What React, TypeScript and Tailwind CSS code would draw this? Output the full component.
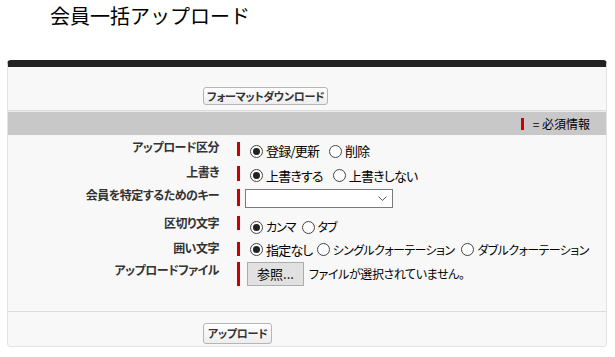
import React from 'react';

// Japanese UI text stack
const jp = "font-['Noto_Sans_CJK_JP','Noto_Sans',sans-serif] [font-feature-settings:'palt']";

interface RadioProps {
  label: string;
  checked?: boolean;
  gap?: string;
  text?: string;
}

const Radio: React.FC<RadioProps> = ({ label, checked, gap = 'mr-[10px]', text = 'text-[13px] tracking-[-0.8px]' }) => (
  <span className={`flex items-center whitespace-nowrap ${gap}`}>
    <span className="shrink-0 w-[13px] h-[13px] rounded-full border border-[#444] bg-white flex items-center justify-center">
      {checked && <span className="w-[7px] h-[7px] rounded-full bg-[#222]" />}
    </span>
    <span className={`ml-[3px] leading-[16px] text-black ${text}`}>{label}</span>
  </span>
);

interface RowProps {
  label: string;
  rowCls: string;
  barCls: string;
  fieldCls: string;
  children: React.ReactNode;
}

const Row: React.FC<RowProps> = ({ label, rowCls, barCls, fieldCls, children }) => (
  <div className={`flex ${rowCls}`}>
    <div className="w-[211px] shrink-0 text-right text-[12px] leading-[16px] tracking-[-0.5px] font-bold text-[#333] whitespace-nowrap">{label}</div>
    <div className={`shrink-0 ml-[18px] w-[3px] bg-[#c00] ${barCls}`} />
    <div className={`flex whitespace-nowrap ${fieldCls}`}>{children}</div>
  </div>
);

const App: React.FC = () => {
  return (
    <div className={`w-[615px] h-[357px] bg-white ${jp}`}>
      {/* Page title */}
      <h1 className="h-[30px] pl-[50px] pt-[3px] text-[20px] leading-[26px] text-black font-['Noto_Sans_CJK_JP',sans-serif] [font-feature-settings:normal]">
        会員一括アップロード
      </h1>

      <div className="mt-[30px] ml-[7px] w-[600px] bg-[#f8f8f8] border border-[#e3e3e3] border-t-[7px] border-t-[#222] rounded-[4px]">
        {/* Top buttons */}
        <div className="h-[44px] pl-[195px] pt-[15px] border-b border-[#dcdcdc]">
          <button className="h-[18px] px-[3px] text-[11px] leading-[16px] font-bold tracking-[-0.3px] text-[#333] bg-gradient-to-b from-white to-[#ededed] border border-[#b5b5b5] rounded-[3px]">
            フォーマットダウンロード
          </button>
        </div>

        {/* Required info bar */}
        <div className="h-[24px] bg-[#c8c8c8] border-t border-[#ececec] flex items-center justify-end pr-[16px]">
          <span className="w-[3px] h-[12px] bg-[#c00]" />
          <span className="ml-[9px] text-[12px] leading-[16px] text-black">= 必須情報</span>
        </div>

        {/* Form rows */}
        <div className="h-[176px] pt-[4px]">
          <Row label="アップロード区分" rowCls="h-[24px]" barCls="mt-[3px] h-[14px]" fieldCls="ml-[10px] items-center">
            <Radio label="登録/更新" checked />
            <Radio label="削除" />
          </Row>
          <Row label="上書き" rowCls="h-[24px] pt-[1px]" barCls="mt-[2px] h-[15px]" fieldCls="ml-[10px] items-center">
            <Radio label="上書きする" checked />
            <Radio label="上書きしない" />
          </Row>
          <Row label="会員を特定するためのキー" rowCls="h-[26px]" barCls="mt-[2px] h-[17px]" fieldCls="ml-[5px] items-start pt-[2px]">
            <div className="w-[148px] h-[19px] bg-white border border-[#7a7a7a] flex items-center justify-end pr-[5px]">
              <svg width="9" height="6" viewBox="0 0 9 6">
                <polyline points="0.5,0.5 4.5,4.5 8.5,0.5" fill="none" stroke="#555" strokeWidth="1" />
              </svg>
            </div>
          </Row>
          <Row label="区切り文字" rowCls="h-[26px] pt-[2px]" barCls="mt-[1px] h-[14px]" fieldCls="ml-[10px] items-center h-[24px]">
            <Radio label="カンマ" checked gap="mr-[6px]" text="text-[12px] tracking-[-1px]" />
            <Radio label="タブ" text="text-[12px] tracking-[-1px]" />
          </Row>
          <Row label="囲い文字" rowCls="h-[20px] pt-[1px]" barCls="mt-[2px] h-[14px]" fieldCls="ml-[10px] items-center h-[19px]">
            <Radio label="指定なし" checked gap="mr-[4px]" />
            <Radio label="シングルクォーテーション" gap="mr-[7px]" text="text-[12px] tracking-[-0.6px]" />
            <Radio label="ダブルクォーテーション" gap="mr-0" text="text-[12px] tracking-[-0.6px]" />
          </Row>
          <Row label="アップロードファイル" rowCls="h-[28px] pt-[3px]" barCls="h-[24px]" fieldCls="ml-[7px] items-center h-[24px]">
            <button className="w-[57px] h-[24px] bg-[#e1e1e1] border border-[#adadad] text-[13px] leading-[16px] text-black">
              参照...
            </button>
            <span className="ml-[5px] text-[12px] leading-[16px] tracking-[-0.4px] text-black">ファイルが選択されていません。</span>
          </Row>
        </div>

        {/* Bottom button */}
        <div className="h-[35px] pl-[195px] pt-[7px] border-t border-[#dcdcdc]">
          <button className="h-[21px] px-[4px] text-[11px] leading-[16px] font-bold tracking-[-0.3px] text-[#333] bg-gradient-to-b from-white to-[#ededed] border border-[#b5b5b5] rounded-[3px]">
            アップロード
          </button>
        </div>
      </div>
    </div>
  );
};

export default App;
